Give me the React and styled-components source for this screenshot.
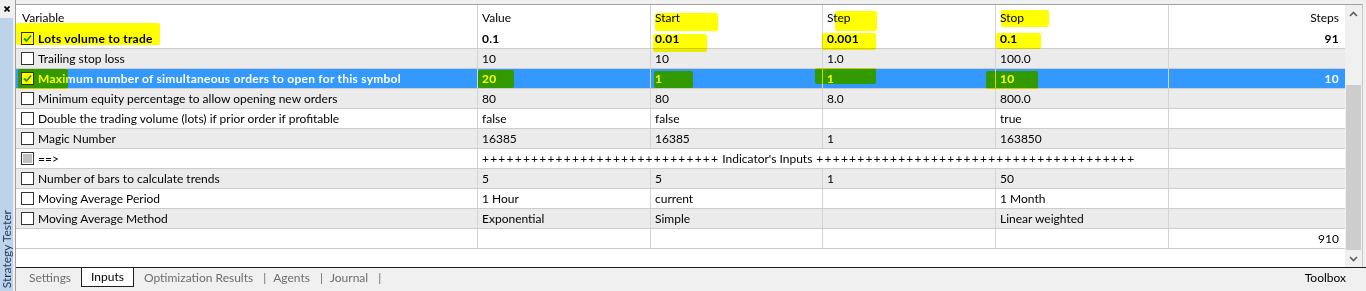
import React from 'react';
import styled, { createGlobalStyle, css } from 'styled-components';

const COLS = '462px 173px 172px 173px 173px 176px';

const rows = [
  { name: 'Lots volume to trade', value: '0.1', start: '0.01', step: '0.001', stop: '0.1', steps: '91', checked: true, bold: true },
  { name: 'Trailing stop loss', value: '10', start: '10', step: '1.0', stop: '100.0', steps: '' },
  { name: 'Maximum number of simultaneous orders to open for this symbol', value: '20', start: '1', step: '1', stop: '10', steps: '10', checked: true, selected: true },
  { name: 'Minimum equity percentage to allow opening new orders', value: '80', start: '80', step: '8.0', stop: '800.0', steps: '' },
  { name: 'Double the trading volume (lots) if prior order if profitable', value: 'false', start: 'false', step: '', stop: 'true', steps: '' },
  { name: 'Magic Number', value: '16385', start: '16385', step: '1', stop: '163850', steps: '' },
  { name: '==>', divider: "Indicator's Inputs", grayed: true },
  { name: 'Number of bars to calculate trends', value: '5', start: '5', step: '1', stop: '50', steps: '' },
  { name: 'Moving Average Period', value: '1 Hour', start: 'current', step: '', stop: '1 Month', steps: '' },
  { name: 'Moving Average Method', value: 'Exponential', start: 'Simple', step: '', stop: 'Linear weighted', steps: '' }
];

// marker strokes drawn over the grid in the screenshot
const marks = [
  { x: 16, y: 23, w: 144, h: 22 },
  { x: 655, y: 13, w: 63, h: 18 },
  { x: 653, y: 34, w: 54, h: 18 },
  { x: 835, y: 11, w: 42, h: 20 },
  { x: 822, y: 33, w: 54, h: 17 },
  { x: 1001, y: 10, w: 48, h: 17 },
  { x: 996, y: 33, w: 45, h: 16 },
  { x: 18, y: 69, w: 50, h: 20 },
  { x: 478, y: 70, w: 36, h: 18 },
  { x: 654, y: 71, w: 39, h: 17 },
  { x: 815, y: 68, w: 61, h: 16 },
  { x: 986, y: 71, w: 52, h: 18 }
];

const GlobalStyle = createGlobalStyle`
  html, body {
    margin: 0;
    padding: 0;
    background: #f0f0f0;
  }
  body {
    font-family: Lato, "Liberation Sans", sans-serif;
    font-size: 12px;
    color: #000;
  }
  * { box-sizing: border-box; }
`;

const Window = styled.div`
  position: relative;
  display: flex;
  width: 1366px;
  height: 291px;
  overflow: hidden;
  background: #f0f0f0;
`;

const SideBar = styled.aside`
  width: 15px;
  flex-shrink: 0;
  display: flex;
  flex-direction: column;
`;

const CloseButton = styled.div`
  height: 18px;
  display: flex;
  align-items: center;
  padding-left: 4px;
`;

const SideStrip = styled.div`
  flex: 1;
  width: 13px;
  background: #bcd3ea;
  display: flex;
  flex-direction: column;
  justify-content: flex-end;
  align-items: center;
  padding-bottom: 3px;
`;

const SideLabel = styled.span`
  writing-mode: vertical-rl;
  transform: rotate(180deg);
  color: #1e395b;
  font-size: 12px;
  line-height: 13px;
`;

const Main = styled.div`
  flex: 1;
  display: flex;
  flex-direction: column;
  padding-top: 4px;
  border-left: 1px solid #a0a0a0;
`;

const Panel = styled.div`
  flex: 1;
  display: flex;
  margin-right: 3px;
  background: #fff;
  border-top: 1px solid #a0a0a0;
  border-right: 1px solid #c8c8c8;
`;

const Grid = styled.div`
  width: 1329px;
  display: flex;
  flex-direction: column;
`;

const Row = styled.div`
  display: grid;
  grid-template-columns: ${COLS};
  height: 20px;
  border-bottom: 1px solid #cccccc;
  background: ${(p) => (p.$selected ? '#3399ff' : p.$alt ? '#ebebeb' : '#fff')};
  color: ${(p) => (p.$selected ? '#fff' : '#000')};
  font-weight: ${(p) => (p.$bold || p.$selected ? 700 : 400)};
  letter-spacing: ${(p) => (p.$bold || p.$selected ? '0.25px' : 'normal')};
`;

const HeaderRow = styled(Row)`
  height: 24px;
  border-bottom: none;
  font-weight: 400;
`;

const Cell = styled.div`
  display: flex;
  align-items: center;
  padding: 0 4px;
  white-space: nowrap;
  border-right: 1px solid #d4d4d4;
  ${(p) =>
    p.$right &&
    css`
      justify-content: flex-end;
      padding-right: 6px;
      border-right: none;
    `}
  ${(p) =>
    p.$span &&
    css`
      grid-column: span 4;
    `}
`;

const NameCell = styled(Cell)`
  padding-left: ${(p) => (p.$header ? '6px' : '5px')};
  gap: 4px;
`;

const Box = styled.span`
  width: 13px;
  height: 13px;
  flex-shrink: 0;
  border: 1px solid #333;
  background: ${(p) => (p.$grayed ? '#c0c0c0' : '#fff')};
  box-shadow: ${(p) => (p.$grayed ? 'inset 0 0 0 1px #fff' : 'none')};
  display: flex;
  align-items: center;
  justify-content: center;
`;

const Plus = styled.span`
  letter-spacing: 1.22px;
`;

const Label = styled.span`
  margin: 0 4px 0 3px;
`;

const Scroll = styled.div`
  width: 17px;
  display: flex;
  flex-direction: column;
  background: #f0f0f0;
`;

const ArrowBtn = styled.div`
  height: 17px;
  display: flex;
  align-items: center;
  justify-content: center;
`;

const Track = styled.div`
  flex: 1;
  display: flex;
  flex-direction: column;
  justify-content: flex-end;
  align-items: center;
`;

const Thumb = styled.div`
  width: 15px;
  height: 165px;
  background: #cdcdcd;
`;

const TabStrip = styled.div`
  height: 24px;
  display: flex;
  align-items: flex-start;
  padding-left: 3px;
  border-top: 1px solid #1e1e1e;
  background: #f0f0f0;
`;

const Tab = styled.div`
  height: 19px;
  display: flex;
  align-items: center;
  padding: 0 10px 1px;
  color: ${(p) => (p.$active ? '#000' : '#6d6d6d')};
  ${(p) =>
    p.$active &&
    css`
      background: #fff;
      border: 1px solid #1e1e1e;
      border-top: none;
      padding: 0 9px 1px;
    `}
`;

const Sep = styled.span`
  height: 19px;
  display: flex;
  align-items: center;
  padding-bottom: 1px;
  margin-right: -3px;
  color: #6d6d6d;
`;

const Toolbox = styled.div`
  margin-left: auto;
  height: 19px;
  display: flex;
  align-items: center;
  padding: 0 20px 1px 0;
`;

const Mark = styled.div`
  position: absolute;
  left: ${(p) => p.$x}px;
  top: ${(p) => p.$y}px;
  width: ${(p) => p.$w}px;
  height: ${(p) => p.$h}px;
  background: #ffff00;
  mix-blend-mode: multiply;
  border-radius: 2px;
  pointer-events: none;
`;

const Check = () => (
  <svg width="11" height="11" viewBox="0 0 11 11">
    <polyline points="2,5.5 4.5,8 9,2.5" fill="none" stroke="#1f9a1f" strokeWidth="1.8" />
  </svg>
);

const Chevron = ({ down }) => (
  <svg width="9" height="6" viewBox="0 0 9 6">
    <polyline
      points={down ? '1,1 4.5,4.5 8,1' : '1,5 4.5,1.5 8,5'}
      fill="none"
      stroke="#606060"
      strokeWidth="1.6"
    />
  </svg>
);

const pluses = (n) => '+'.repeat(n);

const App = () => (
  <Window>
    <GlobalStyle />
    <SideBar>
      <CloseButton>
        <svg width="6" height="6" viewBox="0 0 6 6">
          <path d="M0.5 0.5L5.5 5.5M5.5 0.5L0.5 5.5" stroke="#000" strokeWidth="1.6" />
        </svg>
      </CloseButton>
      <SideStrip>
        <SideLabel>Strategy Tester</SideLabel>
      </SideStrip>
    </SideBar>
    <Main>
      <Panel>
        <Grid>
          <HeaderRow>
            <NameCell $header>Variable</NameCell>
            <Cell>Value</Cell>
            <Cell>Start</Cell>
            <Cell>Step</Cell>
            <Cell>Stop</Cell>
            <Cell $right>Steps</Cell>
          </HeaderRow>
          {rows.map((r, i) => (
            <Row key={r.name} $alt={i % 2 === 1} $selected={r.selected} $bold={r.bold}>
              <NameCell>
                <Box $grayed={r.grayed}>{r.checked && <Check />}</Box>
                {r.name}
              </NameCell>
              {r.divider ? (
                <Cell $span>
                  <Plus>{pluses(29)}</Plus>
                  <Label>{r.divider}</Label>
                  <Plus>{pluses(39)}</Plus>
                </Cell>
              ) : (
                <>
                  <Cell>{r.value}</Cell>
                  <Cell>{r.start}</Cell>
                  <Cell>{r.step}</Cell>
                  <Cell>{r.stop}</Cell>
                </>
              )}
              <Cell $right>{r.steps}</Cell>
            </Row>
          ))}
          <Row>
            <NameCell />
            <Cell />
            <Cell />
            <Cell />
            <Cell />
            <Cell $right>910</Cell>
          </Row>
        </Grid>
        <Scroll>
          <ArrowBtn>
            <Chevron />
          </ArrowBtn>
          <Track>
            <Thumb />
          </Track>
          <ArrowBtn>
            <Chevron down />
          </ArrowBtn>
        </Scroll>
      </Panel>
      <TabStrip>
        <Tab>Settings</Tab>
        <Tab $active>Inputs</Tab>
        <Tab>Optimization Results</Tab>
        <Sep>|</Sep>
        <Tab>Agents</Tab>
        <Sep>|</Sep>
        <Tab>Journal</Tab>
        <Sep>|</Sep>
        <Toolbox>Toolbox</Toolbox>
      </TabStrip>
    </Main>
    {marks.map((m, i) => (
      <Mark key={i} $x={m.x} $y={m.y} $w={m.w} $h={m.h} />
    ))}
  </Window>
);

export default App;
